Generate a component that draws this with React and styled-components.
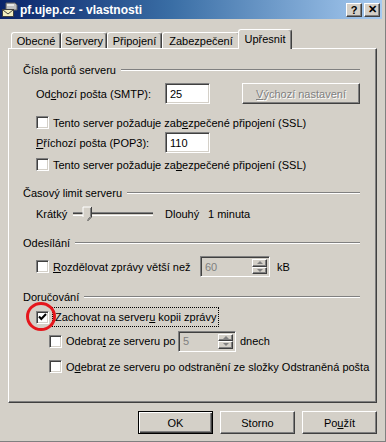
import styled, { createGlobalStyle, css } from 'styled-components'

const Global = createGlobalStyle`
  html, body { margin:0; padding:0; background:#d4d0c8; }
  body { font-family:"Liberation Sans", Arial, sans-serif; font-size:11px; color:#000; }
  * { box-sizing:border-box; }
`

const sunken = css`
  border:1px solid;
  border-color:#808080 #fff #fff #808080;
  box-shadow:inset 1px 1px 0 #404040, inset -1px -1px 0 #d4d0c8;
`
const raised = css`
  border:1px solid;
  border-color:#fff #404040 #404040 #fff;
  box-shadow:inset -1px -1px 0 #808080;
`

const Win = styled.div`
  width:386px;
  height:442px;
  background:#d4d0c8;
  display:flex;
  flex-direction:column;
  padding:0 3px 2px 0;
  border-right:1px solid #808080;
  border-bottom:1px solid #808080;
`
const TitleBar = styled.div`
  height:19px;
  flex:none;
  display:flex;
  align-items:center;
  padding:0 2px 0 2px;
  background:linear-gradient(90deg,#0a246a 0%,#3a6ea5 45%,#a6caf0 100%);
  color:#fff;
  font-weight:bold;
  font-size:12px;
`
const Title = styled.span`
  flex:1;
  margin-left:2px;
  white-space:nowrap;
`
const CapBtn = styled.div`
  width:16px;
  height:14px;
  margin-left:${p => p.$gap || 0}px;
  background:#d4d0c8;
  ${raised};
  color:#000;
  font-weight:bold;
  font-size:11px;
  display:flex;
  align-items:center;
  justify-content:center;
`
const Body = styled.div`
  flex:1;
  display:flex;
  flex-direction:column;
  padding:10px 5px 0 8px;
`
const TabRow = styled.div`
  display:flex;
  align-items:flex-end;
  height:20px;
  padding-left:3px;
  margin-bottom:-1px;
  position:relative;
  z-index:1;
`
const Tab = styled.div`
  width:${p => p.$w}px;
  height:${p => (p.$active ? 20 : 16)}px;
  margin:0 0 ${p => (p.$active ? 0 : 1)}px ${p => (p.$active ? -2 : 0)}px;
  padding-bottom:${p => (p.$active ? 2 : 0)}px;
  background:#d4d0c8;
  border:1px solid;
  border-bottom:none;
  border-color:#fff #404040 #404040 #fff;
  border-radius:3px 3px 0 0;
  box-shadow:inset -1px 0 0 #808080;
  display:flex;
  align-items:center;
  justify-content:center;
  white-space:nowrap;
`
const Panel = styled.div`
  height:355px;
  flex:none;
  ${raised};
  padding:14px 16px 0 14px;
  display:flex;
  flex-direction:column;
`
const Legend = styled.div`
  display:flex;
  align-items:center;
  height:14px;
  margin-top:${p => p.$mt || 0}px;
  white-space:nowrap;
`
const Etch = styled.div`
  flex:1;
  margin-left:5px;
  border-top:1px solid #808080;
  border-bottom:1px solid #fff;
`
const Row = styled.div`
  display:flex;
  align-items:center;
  height:${p => p.$h}px;
  margin-top:${p => p.$mt}px;
  padding-left:${p => p.$in}px;
  position:relative;
  white-space:nowrap;
`
const Label = styled.span`
  width:${p => p.$w}px;
  flex:none;
  margin-left:${p => p.$ml || 0}px;
`
const Key = styled.span`
  text-decoration:underline;
`
const Field = styled.div`
  width:${p => p.$w}px;
  height:21px;
  flex:none;
  ${sunken};
  background:${p => (p.$off ? '#d4d0c8' : '#fff')};
  color:${p => (p.$off ? '#808080' : '#000')};
  display:flex;
  align-items:center;
  padding:2px 2px 2px 4px;
`
const Spin = styled.div`
  margin-left:auto;
  width:15px;
  height:100%;
  display:flex;
  flex-direction:column;
`
const SpinBtn = styled.div`
  flex:1;
  background:#d4d0c8;
  ${raised};
  display:flex;
  align-items:center;
  justify-content:center;
  &::after {
    content:'';
    border-left:3px solid transparent;
    border-right:3px solid transparent;
    ${p => (p.$down ? 'border-top' : 'border-bottom')}:3px solid #808080;
  }
`
const Box = styled.span`
  width:13px;
  height:13px;
  flex:none;
  ${sunken};
  background:#fff;
  display:flex;
  align-items:center;
  justify-content:center;
`
const Focus = styled.span`
  margin-left:3px;
  height:20px;
  line-height:18px;
  padding:0 2px;
  border:1px dotted #000;
  display:block;
`
const Ring = styled.span`
  position:absolute;
  left:3px;
  top:-5px;
  width:30px;
  height:29px;
  border:3px solid #e5161c;
  border-radius:50%;
  pointer-events:none;
`
const GrayBtn = styled.div`
  width:120px;
  height:21px;
  margin-left:32px;
  ${raised};
  color:#808080;
  text-shadow:1px 1px 0 #fff;
  display:flex;
  align-items:center;
  justify-content:center;
`
const Text = styled.span`
  margin-left:${p => p.$ml || 0}px;
  width:${p => (p.$w ? p.$w + 'px' : 'auto')};
  flex:none;
`
const Buttons = styled.div`
  display:flex;
  justify-content:flex-end;
  gap:7px;
  margin-top:8px;
`
const Btn = styled.div`
  width:75px;
  height:23px;
  background:#d4d0c8;
  display:flex;
  align-items:center;
  justify-content:center;
  ${p => (p.$def
    ? css`
        border:1px solid #000;
        box-shadow:inset 1px 1px 0 #fff, inset -1px -1px 0 #404040, inset -2px -2px 0 #808080;
      `
    : raised)};
`

const MailIcon = () => (
  <svg width="16" height="16" viewBox="0 0 16 16">
    <path d="M4 1h9l2 2v5H4z" fill="#c0c0c0" stroke="#606060" />
    <rect x="5" y="2" width="7" height="2" fill="#e8e8e8" />
    <rect x="0.5" y="7.5" width="11" height="7" fill="#f3efc0" stroke="#404040" />
    <path d="M1 8l5 4 5-4" fill="none" stroke="#404040" />
  </svg>
)

const Check = ({ on }) => (
  <Box>
    {on && (
      <svg width="9" height="9" viewBox="0 0 9 9">
        <path d="M1 3.5l2.3 2.5L8 1" fill="none" stroke="#000" strokeWidth="2" />
      </svg>
    )}
  </Box>
)

const Slider = () => (
  <svg width="86" height="22" viewBox="0 0 86 22">
    <rect x="2" y="9" width="80" height="1" fill="#808080" />
    <rect x="2" y="10" width="80" height="1" fill="#404040" />
    <rect x="2" y="12" width="80" height="1" fill="#fff" />
    <path d="M12 4h9v10l-4.5 4.5L12 14z" fill="#d4d0c8" />
    <path d="M12 14V4h8" fill="none" stroke="#fff" />
    <path d="M20.5 4v10l-4 4" fill="none" stroke="#404040" />
    <path d="M19.5 5v8.5l-3 3" fill="none" stroke="#808080" />
  </svg>
)

const SpinBox = ({ w, value }) => (
  <Field $w={w} $off>
    {value}
    <Spin>
      <SpinBtn />
      <SpinBtn $down />
    </Spin>
  </Field>
)

const tabs = [
  { name: 'Obecné', w: 50 },
  { name: 'Servery', w: 46 },
  { name: 'Připojení', w: 55 },
  { name: 'Zabezpečení', w: 78 },
  { name: 'Upřesnit', w: 54, active: true },
]

export default function App() {
  return (
    <Win>
      <Global />
      <TitleBar>
        <MailIcon />
        <Title>pf.ujep.cz - vlastnosti</Title>
        <CapBtn>?</CapBtn>
        <CapBtn $gap={2}>✕</CapBtn>
      </TitleBar>
      <Body>
        <TabRow>
          {tabs.map(t => (
            <Tab key={t.name} $w={t.w} $active={t.active}>{t.name}</Tab>
          ))}
        </TabRow>
        <Panel>
          <Legend>Čísla portů serveru<Etch /></Legend>
          <Row $h={21} $mt={6} $in={13}>
            <Label $w={129}>Od<Key>c</Key>hozí pošta (SMTP):</Label>
            <Field $w={45}>25</Field>
            <GrayBtn><Key>V</Key>ýchozí nastavení</GrayBtn>
          </Row>
          <Row $h={13} $mt={12} $in={13}>
            <Check />
            <Text $ml={4}>Tento server požaduje zab<Key>e</Key>zpečené připojení (SSL)</Text>
          </Row>
          <Row $h={21} $mt={3} $in={13}>
            <Label $w={129}><Key>P</Key>říchozí pošta (POP3):</Label>
            <Field $w={45}>110</Field>
          </Row>
          <Row $h={13} $mt={5} $in={13}>
            <Check />
            <Text $ml={4}>Tento server požaduje za<Key>b</Key>ezpečené připojení (SSL)</Text>
          </Row>

          <Legend $mt={15}>Časový limit serveru<Etch /></Legend>
          <Row $h={22} $mt={3} $in={13}>
            <Text $w={35}>Krátký</Text>
            <Slider />
            <Text $ml={8} $w={43}>Dlouhý</Text>
            <Text>1 minuta</Text>
          </Row>

          <Legend $mt={11}>Odesílání<Etch /></Legend>
          <Row $h={21} $mt={6} $in={13}>
            <Check />
            <Label $w={147} $ml={4}><Key>R</Key>ozdělovat zprávy větší než</Label>
            <SpinBox w={70} value="60" />
            <Text $ml={7}>kB</Text>
          </Row>

          <Legend $mt={13}>Doručování<Etch /></Legend>
          <Row $h={20} $mt={3} $in={13}>
            <Check on />
            <Focus>Zachovat na server<Key>u</Key> kopii zprávy</Focus>
            <Ring />
          </Row>
          <Row $h={20} $mt={4} $in={26}>
            <Check />
            <Label $w={112} $ml={4}>Odebra<Key>t</Key> ze serveru po</Label>
            <SpinBox w={58} value="5" />
            <Text $ml={4}>dnech</Text>
          </Row>
          <Row $h={13} $mt={9} $in={26}>
            <Check />
            <Text $ml={4}>O<Key>d</Key>ebrat ze serveru po odstranění ze složky Odstraněná pošta</Text>
          </Row>
        </Panel>
        <Buttons>
          <Btn $def>OK</Btn>
          <Btn>Storno</Btn>
          <Btn>Po<Key>u</Key>žít</Btn>
        </Buttons>
      </Body>
    </Win>
  )
}
